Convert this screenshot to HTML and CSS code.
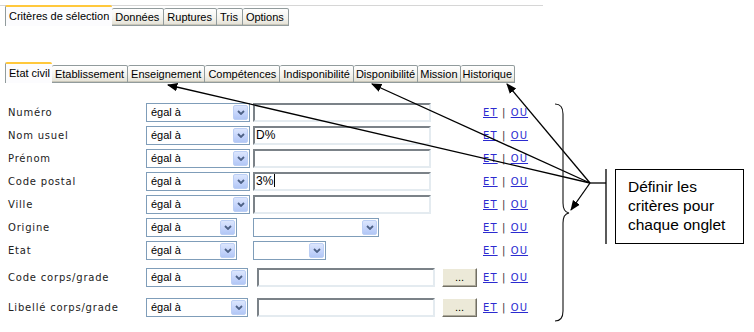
FILE: index.html
```html
<!DOCTYPE html>
<html lang="fr">
<head>
	<meta charset="utf-8">
	<title>Critères de sélection</title>
	<link rel="stylesheet" href="styles.css">
</head>
<body>
<div class="page">

	<ul class="tabs tabs-main">
		<li class="tab active">Critères de sélection</li>
		<li class="tab">Données</li>
		<li class="tab">Ruptures</li>
		<li class="tab">Tris</li>
		<li class="tab">Options</li>
	</ul>

	<ul class="tabs tabs-sub">
		<li class="tab active">Etat civil</li>
		<li class="tab">Etablissement</li>
		<li class="tab">Enseignement</li>
		<li class="tab">Compétences</li>
		<li class="tab">Indisponibilité</li>
		<li class="tab">Disponibilité</li>
		<li class="tab">Mission</li>
		<li class="tab">Historique</li>
	</ul>

	<div class="criteria">
		<div class="row">
			<label>Numéro</label>
			<div class="ctrls">
				<div class="combo"><span>égal à</span><i class="drop"><svg viewBox="0 0 8 5"><path d="M1 1l3 3 3-3"/></svg></i></div>
				<div class="field"></div>
			</div>
			<div class="links"><a href="#">ET</a> | <a href="#">OU</a></div>
		</div>
		<div class="row">
			<label>Nom usuel</label>
			<div class="ctrls">
				<div class="combo"><span>égal à</span><i class="drop"><svg viewBox="0 0 8 5"><path d="M1 1l3 3 3-3"/></svg></i></div>
				<div class="field">D%</div>
			</div>
			<div class="links"><a href="#">ET</a> | <a href="#">OU</a></div>
		</div>
		<div class="row">
			<label>Prénom</label>
			<div class="ctrls">
				<div class="combo"><span>égal à</span><i class="drop"><svg viewBox="0 0 8 5"><path d="M1 1l3 3 3-3"/></svg></i></div>
				<div class="field"></div>
			</div>
			<div class="links"><a href="#">ET</a> | <a href="#">OU</a></div>
		</div>
		<div class="row">
			<label>Code postal</label>
			<div class="ctrls">
				<div class="combo"><span>égal à</span><i class="drop"><svg viewBox="0 0 8 5"><path d="M1 1l3 3 3-3"/></svg></i></div>
				<div class="field">3%<b class="caret"></b></div>
			</div>
			<div class="links"><a href="#">ET</a> | <a href="#">OU</a></div>
		</div>
		<div class="row">
			<label>Ville</label>
			<div class="ctrls">
				<div class="combo"><span>égal à</span><i class="drop"><svg viewBox="0 0 8 5"><path d="M1 1l3 3 3-3"/></svg></i></div>
				<div class="field"></div>
			</div>
			<div class="links"><a href="#">ET</a> | <a href="#">OU</a></div>
		</div>
		<div class="row">
			<label>Origine</label>
			<div class="ctrls">
				<div class="combo narrow"><span>égal à</span><i class="drop"><svg viewBox="0 0 8 5"><path d="M1 1l3 3 3-3"/></svg></i></div>
				<div class="combo list-wide"><span></span><i class="drop"><svg viewBox="0 0 8 5"><path d="M1 1l3 3 3-3"/></svg></i></div>
			</div>
			<div class="links"><a href="#">ET</a> | <a href="#">OU</a></div>
		</div>
		<div class="row">
			<label>Etat</label>
			<div class="ctrls">
				<div class="combo narrow"><span>égal à</span><i class="drop"><svg viewBox="0 0 8 5"><path d="M1 1l3 3 3-3"/></svg></i></div>
				<div class="combo list-short"><span></span><i class="drop"><svg viewBox="0 0 8 5"><path d="M1 1l3 3 3-3"/></svg></i></div>
			</div>
			<div class="links"><a href="#">ET</a> | <a href="#">OU</a></div>
		</div>
		<div class="row grade">
			<label>Code corps/grade</label>
			<div class="ctrls">
				<div class="combo"><span>égal à</span><i class="drop"><svg viewBox="0 0 8 5"><path d="M1 1l3 3 3-3"/></svg></i></div>
				<div class="field"></div>
				<button class="pick" type="button">...</button>
			</div>
			<div class="links"><a href="#">ET</a> | <a href="#">OU</a></div>
		</div>
		<div class="row grade last">
			<label>Libellé corps/grade</label>
			<div class="ctrls">
				<div class="combo"><span>égal à</span><i class="drop"><svg viewBox="0 0 8 5"><path d="M1 1l3 3 3-3"/></svg></i></div>
				<div class="field"></div>
				<button class="pick" type="button">...</button>
			</div>
			<div class="links"><a href="#">ET</a> | <a href="#">OU</a></div>
		</div>
	</div>

	<!-- annotation layer -->
	<svg class="notes" width="754" height="332" viewBox="0 0 754 332">
		<defs>
			<marker id="head" viewBox="0 0 10 10" refX="9" refY="5" markerWidth="8" markerHeight="8" orient="auto">
				<path d="M0 1L10 5L0 9z"/>
			</marker>
		</defs>
		<g class="lines">
			<line x1="590" y1="183" x2="168" y2="85" marker-end="url(#head)"/>
			<line x1="590" y1="183" x2="372" y2="84" marker-end="url(#head)"/>
			<line x1="590" y1="183" x2="507" y2="84" marker-end="url(#head)"/>
			<line x1="590" y1="183" x2="571" y2="210" marker-end="url(#head)"/>
			<line x1="590" y1="183" x2="606" y2="183"/>
			<line x1="606" y1="169" x2="606" y2="244"/>
		</g>
		<path class="brace" d="M555 104Q563 104 563 114L563 203Q563 212 569 213Q563 214 563 223L563 311Q563 321 555 321"/>
	</svg>

	<div class="callout">Définir les<br>critères pour<br>chaque onglet</div>
</div>
</body>
</html>
```

FILE: styles.css
```css
html, body { margin: 0; padding: 0; background: #ffffff; }
body { font: 11px "Liberation Sans", Arial, sans-serif; color: #000000; }
.page { position: relative; width: 754px; height: 332px; overflow: hidden; }

/* tabs */
.tabs { list-style: none; margin: 0; padding: 0 0 0 5px; display: flex; align-items: flex-end; }
.tab { height: 18px; line-height: 17px; padding: 0 3px; box-sizing: border-box; border: 1px solid #919b9c; border-left: none; border-radius: 2px 2px 0 0; background: linear-gradient(#ffffff, #f3f2ec 60%, #e3e0d4); box-shadow: inset 0 -1px 0 #c9c6b9; white-space: nowrap; }
.tab.active { height: 21px; line-height: 18px; border: none; border-left: 1px solid #919b9c; border-top: 2px solid #ffc83c; background: #fcfcfe; box-shadow: none; padding-right: 2px; }
.tabs-main { margin-top: 5px; width: 538px; border-top: 1px solid #d6d6d6; }
.tabs-main .tab { padding: 0 4px 0 3px; }
.tabs-main .tab.active { margin-top: -1px; padding-right: 3px; }
.tabs-sub { margin-top: 36px; }
.tabs-sub .tab:nth-child(n+6) { padding: 0 2px; }

/* criteria grid */
.criteria { padding-top: 20px; }
.row { display: grid; grid-template-columns: 146px 337px auto; align-items: center; height: 19px; margin-bottom: 4px; }
.row.grade { margin-top: 8px; }
.row.last { margin-top: 11px; }
.row label { padding-left: 8px; font: 10px "DejaVu Sans", Verdana, sans-serif; letter-spacing: 0.8px; color: #222222; }
.ctrls { display: flex; align-items: center; }

.combo { position: relative; width: 104px; height: 19px; box-sizing: border-box; border: 1px solid #7f9db9; background: #ffffff; padding-left: 4px; line-height: 17px; }
.combo.narrow { width: 91px; }
.combo.list-wide { width: 126px; margin-left: 16px; }
.combo.list-short { width: 73px; margin-left: 16px; }
.grade .combo { width: 102px; }
.drop { position: absolute; right: 1px; top: 1px; width: 15px; height: 15px; box-sizing: border-box; border: 1px solid #bccff5; border-radius: 2px; background: linear-gradient(#dce6fd, #c3d3fb 60%, #b2c7f5); display: flex; align-items: center; justify-content: center; }
.drop svg { width: 8px; height: 5px; fill: none; stroke: #4d6185; stroke-width: 1.8; }

.field { width: 178px; height: 19px; margin-left: 3px; box-sizing: border-box; border: 2px solid; border-color: #7b8288 #e4ebf0 #e4ebf0 #7b8288; background: #ffffff; font-size: 12px; line-height: 15px; padding-left: 1px; }
.grade .field { margin-left: 9px; }
.caret { display: inline-block; width: 1px; height: 13px; background: #000000; vertical-align: -2px; margin-left: 1px; }

.pick { width: 35px; height: 19px; margin-left: 7px; padding: 0; box-sizing: border-box; border: 1px solid; border-color: #ffffff #716f64 #716f64 #ffffff; box-shadow: inset -1px -1px 0 #aca899; background: #ece9d8; font: 11px "Liberation Sans", Arial, sans-serif; line-height: 17px; }

.links { font: 10px "DejaVu Sans", Verdana, sans-serif; letter-spacing: 1.1px; color: #333333; }
.links a { color: #2b2bd0; }

/* annotations */
.notes { position: absolute; left: 0; top: 0; pointer-events: none; }
.notes .lines { stroke: #000000; stroke-width: 1.3; }
.notes .brace { fill: none; stroke: #111111; stroke-width: 1.1; }
.callout { position: absolute; left: 615px; top: 169px; width: 129px; height: 75px; box-sizing: border-box; border: 1px solid #000000; padding: 7px 0 0 12px; font: 15.5px/19px "Liberation Sans", Arial, sans-serif; }
```
